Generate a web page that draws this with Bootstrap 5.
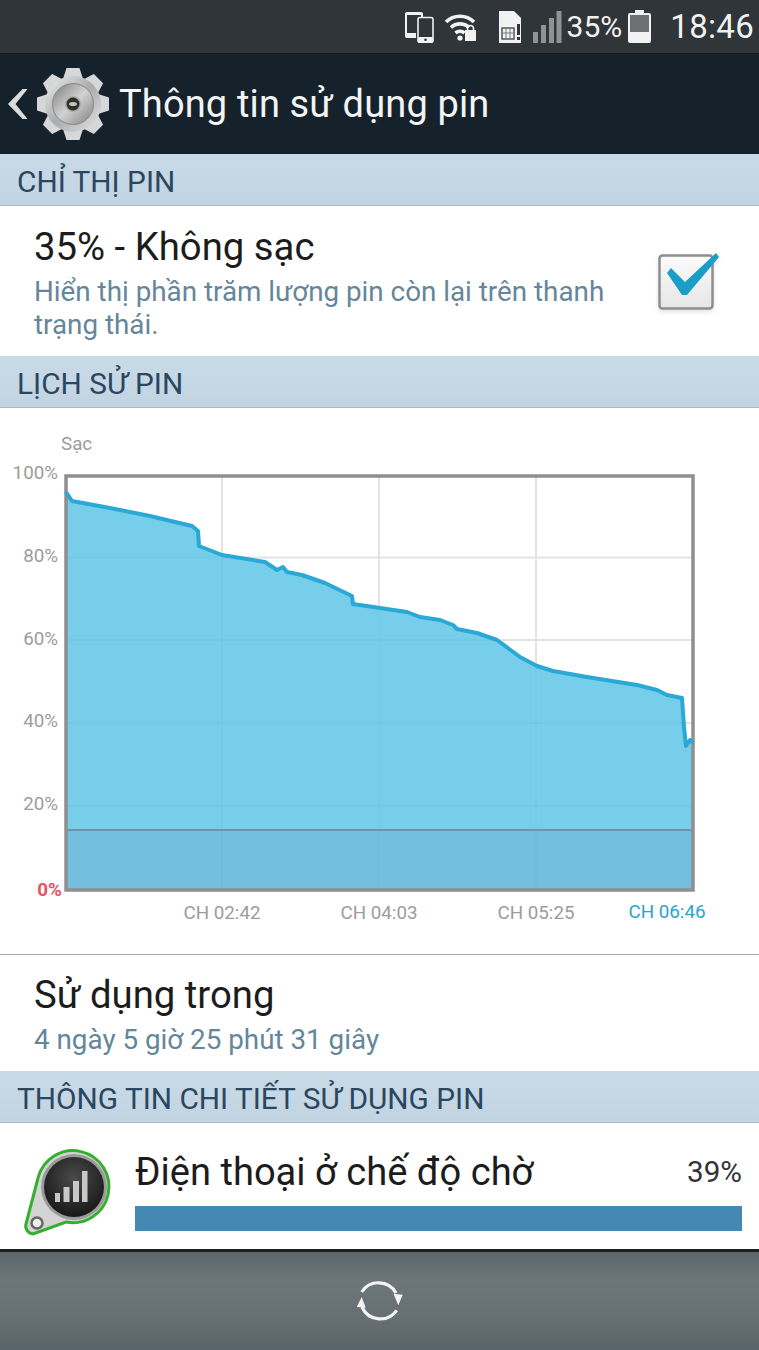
<!DOCTYPE html>
<html lang="vi">
<head>
    <meta charset="UTF-8">
    <meta name="viewport" content="width=device-width, initial-scale=1.0">
    <title>Thông tin sử dụng pin</title>
    <link href="https://cdn.jsdelivr.net/npm/bootstrap@5.3.2/dist/css/bootstrap.min.css" rel="stylesheet">
    <style>
        html, body { margin: 0; background: #fff; }
        body { font-family: Roboto, "Noto Sans", sans-serif; width: 759px; height: 1350px; overflow: hidden; }
        svg { display: block; flex: none; }
        .status-bar { height: 53px; background: #2f3539; color: #f2f2f2; padding-right: 5px; }
        .status-pct { font-size: 30px; line-height: 53px; margin-left: 5px; }
        .status-time { font-size: 33px; line-height: 53px; margin-left: 19px; letter-spacing: .3px; }
        .action-bar { height: 101px; background: #15222c; color: #f4f4f4; border-top: 1px solid #111a20; }
        .action-title { font-size: 38px; margin-left: 9px; letter-spacing: .15px; }
        .sec-head { height: 52px; padding-left: 17px; font-size: 29.8px; line-height: 55px; color: #2b475f;
            background: linear-gradient(#c9dae7, #c2d4e2); border-bottom: 1px solid #a9bbc9; }
        .row-main { font-size: 38.3px; line-height: 42px; color: #1c1c1c; }
        .row-sub { font-size: 27.8px; line-height: 33px; color: #65869a; margin-top: 7px; }
        .pct-row { height: 150px; padding: 20px 39px 0 34px; }
        .pct-text { width: 590px; }
        .check-icon { margin-top: 18px; filter: drop-shadow(0 2px 2px rgba(0,0,0,.12)); }
        .chart-wrap { height: 547px; border-bottom: 1px solid #a6a6a6; }
        .chart-wrap text { font-family: Roboto, sans-serif; font-size: 18.8px; fill: #9c9c9c; }
        .chart-wrap .lbl-now { fill: #2aa5cc; }
        .chart-wrap .lbl-zero { fill: #e2566a; font-weight: 700; }
        .use-row { height: 116px; padding: 19px 0 0 34px; }
        .app-row { height: 126px; padding: 0 17px 0 19px; }
        .app-body { margin-left: 19px; padding-top: 9px; }
        .app-name { font-size: 38.1px; line-height: 44px; color: #1c1c1c; }
        .app-pct { font-size: 29.6px; color: #333; }
        .app-bar { height: 25px; background: #4389b4; margin-top: 12px; }
        .bottom-bar { height: 101px; border-top: 3px solid #1c2022;
            background: linear-gradient(#5d666b, #6c767b 30%, #646e73 70%, #59646a); }
    </style>
</head>
<body>
    <div class="status-bar d-flex justify-content-end align-items-center">
        <svg width="30" height="32" viewBox="0 0 30 32">
            <path d="M3 1h14a2 2 0 0 1 2 2v3h-2V4H3v18h9v5H3a2 2 0 0 1-2-2V3a2 2 0 0 1 2-2z" fill="#f2f2f2"/>
            <rect x="14" y="6.5" width="15" height="25" rx="2" fill="#2f3539" stroke="#f2f2f2" stroke-width="1.6"/>
            <rect x="14" y="26" width="15" height="5.5" rx="1.5" fill="#f2f2f2"/>
            <circle cx="21.5" cy="28.7" r="1.3" fill="#2f3539"/>
        </svg>
        <svg style="margin-left:10px" width="33" height="28" viewBox="0 0 33 28">
            <path d="M2 9a20 20 0 0 1 28 0M7 14.5a13 13 0 0 1 18 0M11.5 20a7 7 0 0 1 9 0" fill="none" stroke="#f2f2f2" stroke-width="3.6"/>
            <circle cx="16" cy="25" r="2.6" fill="#f2f2f2"/>
            <rect x="21" y="17" width="11" height="11" fill="#f2f2f2"/>
            <path d="M23.5 17.500v-2a3 3 0 0 1 6 0v2" fill="none" stroke="#f2f2f2" stroke-width="1.6"/>
        </svg>
        <svg style="margin-left:21px" width="24" height="32" viewBox="0 0 24 32">
            <path d="M1 0h15l7 7v25H1z" fill="#f2f2f2"/>
            <rect x="4" y="17" width="12" height="11" fill="none" stroke="#555" stroke-width="1.5"/>
            <path d="M8 17v11M12 17v11M4 22h12" stroke="#777" stroke-width="1"/>
            <rect x="19" y="13" width="3" height="11" fill="#2f3539"/>
            <rect x="19" y="26" width="3" height="3" fill="#2f3539"/>
        </svg>
        <svg style="margin-left:11px" width="29" height="32" viewBox="0 0 29 32">
            <rect x="0" y="21" width="5" height="11" fill="#8f9394"/>
            <rect x="8" y="14" width="5" height="18" fill="#8f9394"/>
            <rect x="16" y="7" width="5" height="25" fill="#8f9394"/>
            <rect x="23.5" y="0" width="5" height="32" fill="#8f9394"/>
        </svg>
        <span class="status-pct">35%</span>
        <svg style="margin-left:6px" width="23" height="33" viewBox="0 0 23 33">
            <path d="M7 0h9v3h5a2 2 0 0 1 2 2v26a2 2 0 0 1-2 2H2a2 2 0 0 1-2-2V5a2 2 0 0 1 2-2h5z" fill="#f2f2f2"/>
            <rect x="2" y="5" width="19" height="17" fill="#6d6f70"/>
        </svg>
        <span class="status-time">18:46</span>
    </div>

    <div class="action-bar d-flex align-items-center">
        <svg class="ms-2" width="20" height="30" viewBox="0 0 20 30">
            <path d="M14.500 0H19.500L7.500 15L19.500 30H14.500L0 15Z" fill="#d9dcdc"/>
        </svg>
        <svg style="margin-left:8px" width="74" height="74" viewBox="-37 -37 74 74">
            <defs>
                <linearGradient id="gearMetal" x1="0" y1="0" x2="1" y2="1">
                    <stop offset="0" stop-color="#f0f0f0"/>
                    <stop offset=".5" stop-color="#a9abad"/>
                    <stop offset="1" stop-color="#e6e6e6"/>
                </linearGradient>
                <linearGradient id="gearDial" x1="0" y1="0" x2="1" y2="1">
                    <stop offset="0" stop-color="#7c7c7c"/>
                    <stop offset=".5" stop-color="#d2d2d2"/>
                    <stop offset="1" stop-color="#808080"/>
                </linearGradient>
                <path id="gearTooth" d="M-10 -25L-6.500 -36H6.500L10 -25Z" fill="#d6d7d8"/>
            </defs>
            <use href="#gearTooth"/>
            <use href="#gearTooth" transform="rotate(45)"/>
            <use href="#gearTooth" transform="rotate(90)"/>
            <use href="#gearTooth" transform="rotate(135)"/>
            <use href="#gearTooth" transform="rotate(180)"/>
            <use href="#gearTooth" transform="rotate(225)"/>
            <use href="#gearTooth" transform="rotate(270)"/>
            <use href="#gearTooth" transform="rotate(315)"/>
            <circle r="28" fill="url(#gearMetal)"/>
            <circle r="20.5" fill="url(#gearDial)" stroke="#8a8a8a" stroke-width="1"/>
            <circle r="8" fill="#a8a8a8"/>
            <circle r="6.500" fill="#2f2f2a"/>
            <ellipse rx="4" ry="2" fill="#c4c4ba"/>
        </svg>
        <span class="action-title">Thông tin sử dụng pin</span>
    </div>

    <div class="sec-head">CHỈ THỊ PIN</div>
    <div class="pct-row d-flex justify-content-between">
        <div class="pct-text">
            <div class="row-main">35% - Không sạc</div>
            <div class="row-sub">Hiển thị phần trăm lượng pin còn lại trên thanh trạng thái.</div>
        </div>
        <svg class="check-icon" width="66" height="70" viewBox="0 0 66 70">
            <defs>
                <linearGradient id="boxFill" x1="0" y1="0" x2="0" y2="1">
                    <stop offset="0" stop-color="#fbfbfb"/>
                    <stop offset="1" stop-color="#e6e6e6"/>
                </linearGradient>
            </defs>
            <rect x="5.500" y="11.500" width="53" height="53" rx="3" fill="url(#boxFill)" stroke="#8e8e8e" stroke-width="2.500"/>
            <path d="M13 29L17 24L31 38L62 9L65 13L33 51L28 51Z" fill="#1a9dc6"/>
        </svg>
    </div>

    <div class="sec-head">LỊCH SỬ PIN</div>
    <div class="chart-wrap">
        <svg width="759" height="546" viewBox="0 408 759 546">
            <text x="61" y="450">Sạc</text>
            <g text-anchor="end">
                <text x="58" y="479">100%</text>
                <text x="58" y="562">80%</text>
                <text x="58" y="645">60%</text>
                <text x="58" y="727">40%</text>
                <text x="58" y="810">20%</text>
                <text class="lbl-zero" x="62" y="896">0%</text>
            </g>
            <g stroke="#e3e3e3" stroke-width="2">
                <path d="M222 476V889M379 476V889M536 476V889"/>
                <path d="M66 557.500H692M66 640H692M66 723H692M66 806H692"/>
            </g>
            <path fill="#5fc5e7" fill-opacity=".85" d="M66 492L72 501L110 508L150 516L192 526L198 531L199 546L222 555L265 562L277 570L283 567L287 572L302 575L325 583L352 596L353 604L380 608L407 612L420 617L440 620L453 625L457 629L477 633L497 640L520 657L537 666L553 671L587 677L637 685L657 690L667 695L682 698L684 727L686 746L690 740L693 743V890H66Z"/>
            <rect x="66" y="830" width="627" height="60" fill="#6f8fb5" fill-opacity=".22"/>
            <path d="M66 830H693" stroke="#6c93ae" stroke-width="2"/>
            <path d="M66 476H693V890H66Z" fill="none" stroke="#8f8f8f" stroke-width="3.500"/>
            <path d="M66 492L72 501L110 508L150 516L192 526L198 531L199 546L222 555L265 562L277 570L283 567L287 572L302 575L325 583L352 596L353 604L380 608L407 612L420 617L440 620L453 625L457 629L477 633L497 640L520 657L537 666L553 671L587 677L637 685L657 690L667 695L682 698L684 727L686 746L690 740L693 743" fill="none" stroke="#2aa8d6" stroke-width="4" stroke-linejoin="round"/>
            <g text-anchor="middle">
                <text x="222" y="919">CH 02:42</text>
                <text x="379" y="919">CH 04:03</text>
                <text x="536" y="919">CH 05:25</text>
                <text class="lbl-now" x="667" y="918">CH 06:46</text>
            </g>
        </svg>
    </div>
    <div class="use-row">
        <div class="row-main">Sử dụng trong</div>
        <div class="row-sub">4 ngày 5 giờ 25 phút 31 giây</div>
    </div>

    <div class="sec-head">THÔNG TIN CHI TIẾT SỬ DỤNG PIN</div>
    <div class="app-row d-flex align-items-center">
        <svg width="97" height="100" viewBox="19 1136 97 100">
            <defs>
                <radialGradient id="dialDark" cx=".5" cy=".35" r=".7">
                    <stop offset="0" stop-color="#4a4a4a"/>
                    <stop offset="1" stop-color="#141414"/>
                </radialGradient>
            </defs>
            <path d="M38 1178A36 36 0 1 1 66 1222L33 1234A8 8 0 0 1 26 1224Z" fill="#d4d4d4" stroke="#35b02e" stroke-width="3"/>
            <circle cx="74" cy="1187" r="33" fill="#9a9a9a"/>
            <circle cx="74" cy="1187" r="30" fill="url(#dialDark)"/>
            <circle cx="37" cy="1223" r="5.500" fill="#eee" stroke="#666" stroke-width="2.500"/>
            <g fill="#c8c8c8">
                <rect x="55" y="1193" width="5" height="9"/>
                <rect x="63.500" y="1187" width="6" height="15"/>
                <rect x="73" y="1181" width="6" height="21"/>
                <rect x="82" y="1171" width="5.500" height="31"/>
            </g>
        </svg>
        <div class="app-body flex-grow-1">
            <div class="d-flex justify-content-between align-items-center">
                <span class="app-name">Điện thoại ở chế độ chờ</span>
                <span class="app-pct">39%</span>
            </div>
            <div class="app-bar"></div>
        </div>
    </div>

    <div class="bottom-bar d-flex justify-content-center align-items-center">
        <svg width="48" height="48" viewBox="356 1275 48 48">
            <path d="M361.700 1290A20 20 0 0 1 396 1291" fill="none" stroke="#f4f4f4" stroke-width="3.200"/>
            <path d="M393.500 1291.700L402.700 1292.700L398.300 1303.300Z" fill="#f4f4f4"/>
            <path d="M396.700 1308.300A20 20 0 0 1 362 1305" fill="none" stroke="#f4f4f4" stroke-width="3.200"/>
            <path d="M356.700 1305L365.700 1305.700L361.700 1295Z" fill="#f4f4f4"/>
        </svg>
    </div>
</body>
</html>
